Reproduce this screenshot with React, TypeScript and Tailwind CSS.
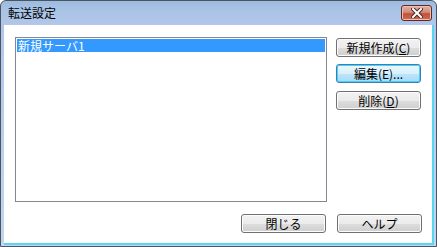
import React from 'react';

const font = { fontFamily: '"Noto Sans CJK JP", "Noto Sans", sans-serif' };

function Button({
  children,
  focused = false,
}: {
  children: React.ReactNode;
  focused?: boolean;
}) {
  return (
    <button
      className={
        focused
          ? 'w-[85px] h-[19px] rounded-[3px] border border-[#3c7fb1] bg-[linear-gradient(#eaf6fd_0%,#d9f0fc_50%,#bee6fd_51%,#a7d9f5_100%)] shadow-[inset_0_0_0_1px_#48d0f6] text-[12px] leading-none text-black flex items-center justify-center'
          : 'w-[85px] h-[19px] rounded-[3px] border border-[#707070] bg-[linear-gradient(#f2f2f2_0%,#ebebeb_50%,#dddddd_51%,#cfcfcf_100%)] shadow-[inset_0_0_0_1px_#fcfcfc] text-[12px] leading-none text-black flex items-center justify-center'
      }
      style={font}
    >
      {children}
    </button>
  );
}

export default function App() {
  return (
    <div
      className="w-[437px] h-[247px] flex flex-col border border-[#4a5560] rounded-t-[6px] bg-[linear-gradient(#9dbbe0_0px,#a9c4e5_10px,#b2c6ea_24px,#c3d6ee_100%)] overflow-hidden"
      style={font}
    >
      {/* Title bar */}
      <div className="h-[24px] flex items-center pl-[7px] pr-[4px]">
        <span className="text-[12px] text-black leading-none">転送設定</span>
        <div className="ml-auto mt-[-1px] w-[31px] h-[16px] rounded-[3px] border border-[#5b2a22] bg-[linear-gradient(#e3b1a6_0%,#d48a79_45%,#c4513b_55%,#cf6a4e_100%)] shadow-[inset_0_0_0_1px_#eebfb3] flex items-center justify-center">
          <svg width="12" height="10" viewBox="0 0 12 10">
            <path
              d="M2 1 L10 9 M10 1 L2 9"
              stroke="#4a2a24"
              strokeWidth="4"
              strokeLinecap="square"
            />
            <path
              d="M2 1 L10 9 M10 1 L2 9"
              stroke="#ffffff"
              strokeWidth="2"
              strokeLinecap="square"
            />
          </svg>
        </div>
      </div>

      {/* Client area */}
      <div className="flex-1 ml-[3px] mr-[2px] mb-[1px] bg-white border-r-2 border-b-2 border-[#5ad6f0] pt-[12px] pl-[11px] pr-[10px] flex flex-col">
        <div className="flex gap-[9px]">
          <div className="w-[312px] h-[165px] border border-[#828790] bg-white p-[1px]">
            <div className="h-[13px] bg-[#3399ff] text-white text-[12px] leading-[13px] pl-[1px]">
              新規サーバ1
            </div>
          </div>
          <div className="flex flex-col pt-[1px]">
            <Button>
              新規作成(<span className="underline underline-offset-1">C</span>)
            </Button>
            <div className="h-[7px]" />
            <Button focused>編集(E)...</Button>
            <div className="h-[8px]" />
            <Button>
              削除(<span className="underline underline-offset-1">D</span>)
            </Button>
          </div>
        </div>
        <div className="flex justify-end gap-[11px] mt-[12px]">
          <Button>閉じる</Button>
          <Button>ヘルプ</Button>
        </div>
      </div>
    </div>
  );
}
